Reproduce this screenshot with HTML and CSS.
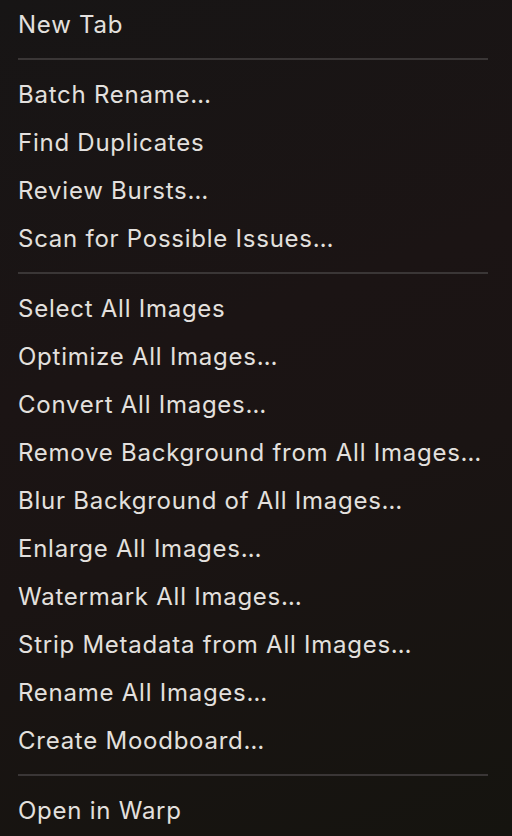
FILE: index.html
```html
<!DOCTYPE html>
<html lang="en">
<head>
    <meta charset="UTF-8">
    <meta name="viewport" content="width=device-width, initial-scale=1.0">
    <title>Context Menu</title>
    <link rel="stylesheet" href="styles.css">
</head>
<body>
    <div class="menu">
        <div class="menu-item">New Tab</div>
        <div class="separator"></div>
        <div class="menu-item">Batch Rename…</div>
        <div class="menu-item">Find Duplicates</div>
        <div class="menu-item">Review Bursts…</div>
        <div class="menu-item">Scan for Possible Issues…</div>
        <div class="separator"></div>
        <div class="menu-item">Select All Images</div>
        <div class="menu-item">Optimize All Images…</div>
        <div class="menu-item">Convert All Images…</div>
        <div class="menu-item">Remove Background from All Images…</div>
        <div class="menu-item">Blur Background of All Images…</div>
        <div class="menu-item">Enlarge All Images…</div>
        <div class="menu-item">Watermark All Images…</div>
        <div class="menu-item">Strip Metadata from All Images…</div>
        <div class="menu-item">Rename All Images…</div>
        <div class="menu-item">Create Moodboard…</div>
        <div class="separator"></div>
        <div class="menu-item">Open in Warp</div>
    </div>
</body>
</html>
```

FILE: styles.css
```css
body {
    margin: 0;
    width: 512px;
    height: 836px;
    overflow: hidden;
    font-family: Inter, 'Noto Sans', sans-serif;
    background: linear-gradient(160deg, #171515 0%, #1b1414 40%, #1a1413 60%, #15140f 100%);
    color: #e3e0de;
}

.menu {
    display: flex;
    flex-direction: column;
}

.menu-item {
    height: 48px;
    box-sizing: border-box;
    padding: 1px 0 0 18px;
    line-height: 47px;
    font-size: 24px;
    letter-spacing: 0.75px;
    white-space: nowrap;
}

.separator {
    height: 2px;
    margin: 10px 24px 10px 18px;
    background-color: #3a3636;
}
```
